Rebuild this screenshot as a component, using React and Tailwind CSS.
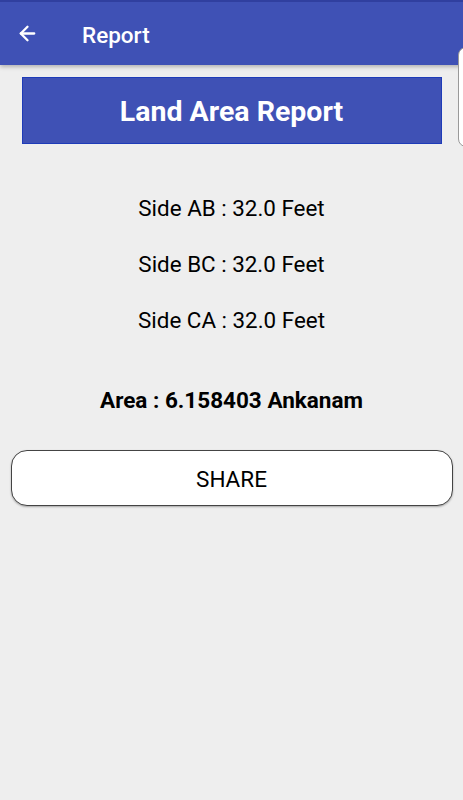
import { ArrowLeft } from 'lucide-react';

const sides = [
  ['AB', '32.0'],
  ['BC', '32.0'],
  ['CA', '32.0'],
];

const App = () => {
  return (
    <div className="relative w-[463px] h-[800px] overflow-hidden bg-[#eeeeee] font-['Roboto',sans-serif]">
      <header className="relative z-10 h-[65px] bg-[#3f51b5] border-t-2 border-[#303f9f] shadow-[0_2px_4px_rgba(0,0,0,0.25)] flex items-center">
        <button className="ml-[15px] w-[24px] h-[24px] flex items-center justify-center text-white">
          <ArrowLeft size={23} strokeWidth={2.4} />
        </button>
        <h1 className="ml-[43px] text-white text-[22.5px] font-medium leading-[26px] mt-[2px]">Report</h1>
      </header>

      <main className="flex flex-col items-center">
        <div className="mt-[12px] w-[420px] h-[67px] bg-[#3f51b5] border border-[#1e3bb8] flex items-center justify-center">
          <h2 className="text-white text-[28.5px] font-bold leading-[34px] mt-[3px]">Land Area Report</h2>
        </div>

        <div className="mt-[51px] flex flex-col items-center gap-[30px]">
          {sides.map(([name, len]) => (
            <p key={name} className="text-black text-[22.4px] leading-[26px]">
              Side {name} : {len} Feet
            </p>
          ))}
        </div>

        <p className="mt-[54px] text-black text-[22.5px] leading-[26px] font-bold">
          Area : 6.158403 Ankanam
        </p>

        <button className="mt-[37px] w-[442px] h-[56px] pt-[3px] bg-white rounded-[16px] border border-[#444] shadow-[0_1px_2px_rgba(0,0,0,0.3)] text-black text-[22.5px]">
          SHARE
        </button>
      </main>

      <div className="absolute left-[458px] top-[47px] w-[20px] h-[100px] bg-white rounded-l-[8px] border border-[#999] z-20" />
    </div>
  );
};

export default App;
